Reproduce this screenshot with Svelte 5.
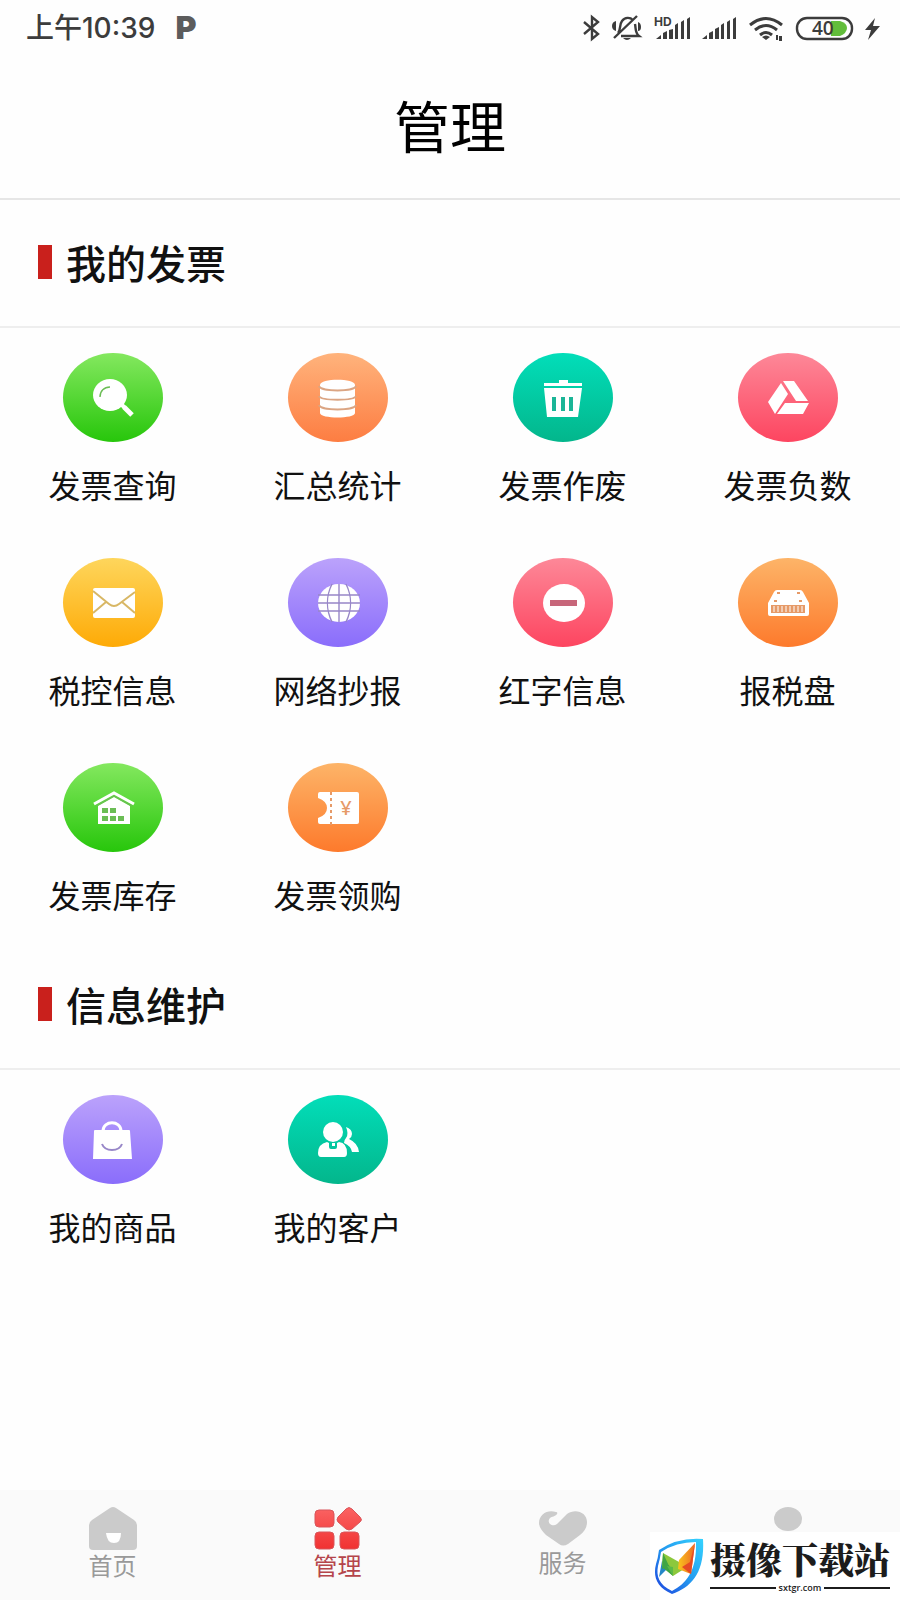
<script>
    const sections = [
        {
            title: "我的发票",
            items: [
                { name: "发票查询", icon: "search", color: "green" },
                { name: "汇总统计", icon: "stack", color: "orange" },
                { name: "发票作废", icon: "trash", color: "teal" },
                { name: "发票负数", icon: "triangle", color: "pink" },
                { name: "税控信息", icon: "mail", color: "yellow" },
                { name: "网络抄报", icon: "globe", color: "purple" },
                { name: "红字信息", icon: "minus", color: "pink" },
                { name: "报税盘", icon: "disk", color: "amber" },
                { name: "发票库存", icon: "store", color: "green" },
                { name: "发票领购", icon: "ticket", color: "amber" },
            ],
        },
        {
            title: "信息维护",
            items: [
                { name: "我的商品", icon: "bag", color: "purple" },
                { name: "我的客户", icon: "people", color: "teal" },
            ],
        },
    ];

    let active = $state("manage");
</script>

{#snippet signal()}
    <path d="M0 22l5-4v4zM7 22v-6l4-2v8zM13 22V12l4-2v12zM19 22V8l3-2v16zM25 22V5l3-2v19zM31 22V2l3-2v22z" />
{/snippet}

{#snippet tileIcon(icon)}
    <svg viewBox="0 0 100 89" aria-hidden="true">
        {#if icon === "search"}
            <ellipse cx="47" cy="42" rx="17" ry="16" />
            <path class="line" d="M58 51l4 4" stroke-width="4" />
            <path class="line" d="M61 54l8 8" stroke-width="5" />
            <path class="cut thin" d="M37 44c0-6 4-10 10-10" />
        {:else if icon === "stack"}
            <path d="M32 32c0-7 35-7 35 0v28c0 6-35 6-35 0z" />
            <path class="cut" d="M31 33c2 6 35 6 37 0M31 43c2 5 35 5 37 0M31 52c2 6 35 6 37 0" />
        {:else if icon === "trash"}
            <path d="M46 27h9v3h14v3H31v-3h15zM31 35h38l-4 29H34z" />
            <path class="hole" d="M39 44h4v14h-4zM48 44h4v14h-4zM56 44h4v14h-4z" />
        {:else if icon === "triangle"}
            <path d="M43 30l7 11-13 20-7-12zM45 28h11l14 20H58zM47 50h24l-6 11H39z" />
        {:else if icon === "mail"}
            <rect x="30" y="30" width="42" height="30" rx="2" />
            <path class="cut" d="M30 33l16 13q5 4 10 0l16-12M30 55l13-11M72 55L59 44" />
        {:else if icon === "globe"}
            <ellipse cx="51" cy="45" rx="21" ry="19" />
            <path class="cut thin" d="M51 26v38M30 45h42M30 37h42M30 53h42M44 26c-6 12-6 26 0 38M58 26c6 12 6 26 0 38" />
        {:else if icon === "minus"}
            <ellipse cx="51" cy="45" rx="21" ry="19" />
            <path class="hole" d="M37 42h27v6H37z" />
        {:else if icon === "disk"}
            <path d="M39 32h23q2 0 3 2l6 11v11q0 2-2 2H32q-2 0-2-2V45l6-11q1-2 3-2z" />
            <path class="hole" d="M33 47h34v8H33z" />
            <path class="hole" d="M39 34h3v2h-3zM59 34h3v2h-3zM36 42h3v2h-3zM61 42h3v2h-3z" />
            <path class="line" d="M36 48v6M40 48v6M44 48v6M48 48v6M52 48v6M56 48v6M60 48v6M64 48v6" stroke-width="1" />
        {:else if icon === "store"}
            <path class="line" d="M31 41l20-11 20 11" stroke-width="3" />
            <path d="M35 43l16-9 16 9v18H35z" />
            <path class="cut thin" d="M33 43l18-10 18 10" />
            <path class="hole" d="M39 45h6v5h-6zM47 45h6v5h-6zM39 53h6v5h-6zM47 53h6v5h-6zM55 53h6v5h-6z" />
        {:else if icon === "ticket"}
            <path d="M32 29h37q2 0 2 2v28q0 2-2 2H32q-2 0-2-2v-4q9-3 9-10t-9-10v-4q0-2 2-2z" />
            <path class="cut" d="M43 29v33" stroke-dasharray="3 3" />
            <text x="58" y="52" text-anchor="middle">¥</text>
        {:else if icon === "bag"}
            <path d="M32 35h34q1 0 1 1l2 28H30l1-28q0-1 1-1z" />
            <path class="line" d="M40 36c0-11 18-11 18 0" stroke-width="3" />
            <path class="cut" d="M39 49c3 8 17 8 20 0" />
        {:else if icon === "people"}
            <ellipse cx="45" cy="37" rx="10" ry="10" />
            <path d="M39 47l2 1v4q0 2 2 2h4q2 0 2-2v-4l2-1q8 1 8 11 0 4-3 4H33q-3 0-3-4 0-9 9-11z" />
            <path d="M44 48h3v3h-3zM58 32q6 2 6 7 0 3-3 5 9 4 10 13h-7q-1-6-8-9 0-3 2-5 3-4 0-11z" />
        {/if}
    </svg>
{/snippet}

<div class="app">
    <div class="status">
        <span class="time">上午10:39</span>
        <span class="carrier">P</span>
        <div class="status-icons">
            <svg width="17" height="26" viewBox="0 0 17 26" aria-hidden="true">
                <path class="stroke" d="M1 7l14 12-6 5V2l6 5L1 19" />
            </svg>
            <svg width="29" height="26" viewBox="0 0 29 26" aria-hidden="true">
                <path class="stroke" d="M6 18c3-3 1-8 4-12 3-4 8-4 11-1M23 9c1 5 0 9 4 12H9M2 23L25 1" />
                <path d="M11 23h8q-4 4-8 0zM4 6v10q-4-1-4-5t4-5zM26 7q3 1 3 5t-3 4z" />
            </svg>
            <svg width="37" height="26" viewBox="0 0 37 26" aria-hidden="true">
                <path d="M3 24l5-4v4zM10 24v-6l4-2v8zM16 24v-9l4-1v10zM22 24V10l3-2v16zM28 24V7l3-2v19zM34 24V4l3-2v22z" />
                <text class="hd" x="1" y="11">HD</text>
            </svg>
            <svg width="35" height="26" viewBox="0 0 35 26" aria-hidden="true">
                <g transform="translate(0 2)">{@render signal()}</g>
            </svg>
            <svg width="35" height="26" viewBox="0 0 35 26" aria-hidden="true">
                <path class="wave" d="M1 10q16-13 32 0M6 15q11-9 22 0M11 20q6-5 12 0" />
                <path d="M13 22q4-3 8 0l-4 3zM27 20h2v5h-2zM30 21h3v5h-3z" />
            </svg>
            <svg width="57" height="26" viewBox="0 0 57 26" aria-hidden="true">
                <rect class="stroke" x="1" y="3" width="55" height="21" rx="10" />
                <path class="charge" d="M35 6h9q7 2 7 7t-7 8h-9z" />
                <text class="percent" x="16" y="20">40</text>
            </svg>
            <svg width="15" height="26" viewBox="0 0 15 26" aria-hidden="true">
                <path d="M10 3L0 15h6L3 25l12-14H8z" />
            </svg>
        </div>
    </div>

    <header>
        <h1>管理</h1>
    </header>

    <main>
        {#each sections as section (section.title)}
            <section>
                <h2>{section.title}</h2>
                <div class="grid">
                    {#each section.items as item (item.name)}
                        <button class="tile" type="button">
                            <span class="circle {item.color}">
                                {@render tileIcon(item.icon)}
                            </span>
                            <span class="label">{item.name}</span>
                        </button>
                    {/each}
                </div>
            </section>
        {/each}
    </main>

    <footer>
        <nav>
            <a href="#home" class:active={active === "home"} onclick={() => (active = "home")}>
                <svg width="48" height="44" viewBox="0 0 48 44" aria-hidden="true">
                    <path d="M21 1q3-2 6 0l18 12q3 2 3 5v21q0 4-4 4H4q-4 0-4-4V18q0-3 3-5z" />
                    <path class="mouth" d="M17 26h15q0 10-7 10t-8-10z" />
                </svg>
                首页
            </a>
            <a href="#manage" class:active={active === "manage"} onclick={() => (active = "manage")}>
                <svg width="48" height="44" viewBox="0 0 48 44" aria-hidden="true">
                    <defs>
                        <linearGradient id="red" gradientUnits="userSpaceOnUse" x1="0" y1="0" x2="0" y2="44">
                            <stop offset="0" stop-color="#fb6464" />
                            <stop offset="1" stop-color="#f02f2f" />
                        </linearGradient>
                    </defs>
                    <g fill="url(#red)" stroke="#d9555a">
                        <rect x="1" y="3" width="19" height="17" rx="4" />
                        <path d="M32 2q3-3 6 0l8 8q3 3 0 5l-8 7q-3 2-6 0l-8-7q-2-2 0-5z" />
                        <rect x="1" y="25" width="19" height="17" rx="4" />
                        <rect x="26" y="25" width="19" height="17" rx="4" />
                    </g>
                </svg>
                管理
            </a>
            <a href="#service" class:active={active === "service"} onclick={() => (active = "service")}>
                <svg width="48" height="41" viewBox="0 0 48 41" aria-hidden="true">
                    <path d="M17 5C9 2 0 7 0 16c0 4 3 8 7 12l13 9q4 3 9 0l12-9c5-4 7-8 7-13C48 5 36 1 28 7L18 17c-5 4-11-2-7-6 2-2 5-1 7-4q1-2-1-2z" />
                </svg>
                服务
            </a>
            <a href="#mine" aria-label="我的" class:active={active === "mine"} onclick={() => (active = "mine")}>
                <svg width="48" height="44" viewBox="0 0 48 44" aria-hidden="true">
                    <ellipse cx="24" cy="12" rx="14" ry="12" />
                    <path d="M2 44q0-19 14-19h16q14 0 14 19z" />
                </svg>
            </a>
        </nav>
        <div class="badge">
            <svg width="50" height="57" viewBox="0 0 50 57" aria-hidden="true">
                <defs>
                    <linearGradient id="shield" x1="1" y1="0" x2="0" y2="1">
                        <stop offset="0" stop-color="#35d3ff" />
                        <stop offset=".5" stop-color="#249bef" />
                        <stop offset="1" stop-color="#1d40df" />
                    </linearGradient>
                    <linearGradient id="wing" x1="0" y1="0" x2="1" y2="0">
                        <stop offset="0" stop-color="#f9c51c" />
                        <stop offset="1" stop-color="#ee6a24" />
                    </linearGradient>
                </defs>
                <path fill="url(#shield)" d="M49 1Q24-1 5 12 4 20 2 26C-1 38 2 49 18 56 38 49 51 34 49 1z" />
                <path fill="#fff" d="M42 4Q22 4 7 14 6 21 4 28C2 38 5 47 18 53 32 46 43 33 42 4z" />
                <path fill="#2487c8" d="M8 23l7 6-10 10z" />
                <path fill="#8cc83c" d="M9 15l16 9 5 7-11 7-11-10z" />
                <path fill="#3fa544" d="M9 15l6 13-7 3zM8 29l7-2 4 11z" />
                <path fill="#5bb947" d="M19 29v9l-6-10z" />
                <path fill="url(#wing)" d="M41 5L25 22l-1 9 13 5z" />
                <path fill="#e64b24" d="M41 5l-4 31-9-7 8-5z" />
            </svg>
            <div class="badge-text">
                <strong>摄像下载站</strong>
                <small>sxtgr.com</small>
            </div>
        </div>
    </footer>
</div>

<style>
    :global(body) {
        background: #fefefe;
    }

    .app {
        min-height: 100vh;
        display: flex;
        flex-direction: column;
        color: #111;
        font-family: "Noto Sans CJK SC", sans-serif;
    }

    .status {
        height: 52px;
        padding: 2px 20px 0 26px;
        display: flex;
        align-items: center;
        color: #3c3c3c;
    }

    .time {
        font: 500 28px/40px Inter, "Noto Sans CJK SC", sans-serif;
    }

    .carrier {
        margin-left: 20px;
        font: 900 32px/40px Inter, sans-serif;
        color: #5c5c5c;
    }

    .status-icons {
        margin-left: auto;
        display: flex;
        align-items: center;
        gap: 12px;
    }

    .status-icons svg {
        display: block;
        overflow: visible;
        fill: #3c3c3c;
    }

    .status-icons .stroke {
        fill: none;
        stroke: #3c3c3c;
        stroke-width: 2.4;
    }

    .status-icons .wave {
        fill: none;
        stroke: #3c3c3c;
        stroke-width: 3;
    }

    .status-icons .charge {
        fill: #62bd3b;
    }

    .hd {
        font: 700 12px Inter, sans-serif;
    }

    .percent {
        font: 600 19px "Open Sans", sans-serif;
    }

    header {
        height: 140px;
        padding-bottom: 4px;
        display: flex;
        align-items: center;
        justify-content: center;
        border-bottom: 2px solid #e6e6e6;
    }

    h1 {
        margin: 0;
        font-size: 56px;
        font-weight: 400;
        line-height: 80px;
        color: #000;
    }

    main {
        flex: 1;
    }

    h2 {
        height: 124px;
        margin: 0;
        padding: 0 38px 2px;
        display: flex;
        align-items: center;
        gap: 14px;
        border-bottom: 2px solid #eee;
        font-size: 40px;
        font-weight: 500;
        line-height: 60px;
    }

    h2::before {
        content: "";
        width: 14px;
        height: 34px;
        background: #c9201c;
    }

    .grid {
        display: grid;
        grid-template-columns: repeat(4, 1fr);
        row-gap: 1px;
    }

    .tile {
        height: 204px;
        padding: 25px 0 0;
        display: flex;
        flex-direction: column;
        align-items: center;
        gap: 18px;
        border: none;
        background: none;
        color: inherit;
        font-family: inherit;
        cursor: pointer;
    }

    .label {
        font-size: 32px;
        line-height: 48px;
    }

    .circle {
        width: 100px;
        height: 89px;
        border-radius: 50%;
        background: linear-gradient(var(--from), var(--to));
    }

    .circle svg {
        display: block;
        width: 100%;
        height: 100%;
        fill: #fff;
    }

    .circle .line {
        fill: none;
        stroke: #fff;
    }

    .circle .cut {
        fill: none;
        stroke: var(--mid);
        stroke-width: 2;
    }

    .circle .thin {
        stroke-width: 1.4;
    }

    .circle .hole,
    .circle text {
        fill: var(--mid);
    }

    .circle text {
        font: 500 20px "Noto Sans", sans-serif;
    }

    .green {
        --from: #84e85f;
        --mid: #6bbd55;
        --to: #27c60b;
    }

    .orange {
        --from: #ffb37c;
        --mid: #dba583;
        --to: #fd7d42;
    }

    .amber {
        --from: #fdb468;
        --mid: #e69a68;
        --to: #fd7a2c;
    }

    .teal {
        --from: #02deb9;
        --mid: #1bb597;
        --to: #03b68c;
    }

    .pink {
        --from: #fd8898;
        --mid: #c7667a;
        --to: #fd4560;
    }

    .yellow {
        --from: #fed65c;
        --mid: #d8b765;
        --to: #feaa06;
    }

    .purple {
        --from: #bba2fb;
        --mid: #9887c8;
        --to: #8a6dfb;
    }

    footer {
        position: relative;
        background: #fafafa;
    }

    nav {
        height: 110px;
        display: grid;
        grid-template-columns: repeat(4, 1fr);
    }

    nav a {
        padding-top: 17px;
        display: flex;
        flex-direction: column;
        align-items: center;
        color: #999;
        font-size: 24px;
        line-height: 28px;
        text-decoration: none;
    }

    nav a svg {
        fill: #cbcbcb;
    }

    nav a .mouth {
        fill: #fff;
    }

    nav a.active {
        color: #b5454b;
    }

    .badge {
        position: absolute;
        right: 0;
        bottom: 0;
        height: 68px;
        padding: 0 10px 0 4px;
        display: flex;
        align-items: center;
        gap: 6px;
        background: #fff;
        color: #1c1c1c;
    }

    .badge-text {
        display: flex;
        flex-direction: column;
    }

    .badge strong {
        font-family: "Noto Serif CJK SC", "Noto Sans CJK SC", serif;
        font-size: 36px;
        font-weight: 900;
        line-height: 44px;
    }

    .badge small {
        display: flex;
        align-items: center;
        gap: 3px;
        font: 600 9px/14px "Open Sans", sans-serif;
    }

    .badge small::before,
    .badge small::after {
        content: "";
        flex: 1;
        height: 2px;
        background: #1c1c1c;
    }
</style>
